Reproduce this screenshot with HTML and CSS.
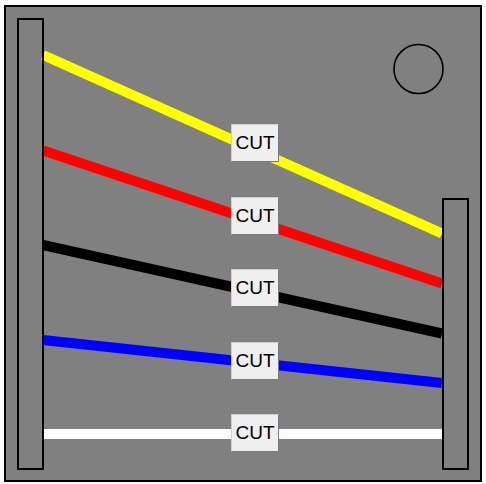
FILE: index.html
```html
<!DOCTYPE html>
<html>
<head>
<meta charset="utf-8">
<link rel="stylesheet" href="styles.css">
</head>
<body>
<div class="board">
  <svg class="wires" width="486" height="484" viewBox="0 0 486 484">
    <line x1="43" y1="55" x2="442" y2="233.5" stroke="#ffff00" stroke-width="10"/>
    <line x1="43" y1="150.5" x2="442" y2="283.5" stroke="#ff0000" stroke-width="10"/>
    <line x1="43" y1="245" x2="442" y2="333.5" stroke="#000000" stroke-width="10"/>
    <line x1="43" y1="340" x2="442" y2="383" stroke="#0000ff" stroke-width="10"/>
    <line x1="43" y1="434" x2="442" y2="434" stroke="#ffffff" stroke-width="10"/>
    <rect x="18" y="19" width="25" height="450" fill="none" stroke="#000" stroke-width="2"/>
    <rect x="443" y="199" width="25" height="270" fill="none" stroke="#000" stroke-width="2"/>
    <circle cx="418.5" cy="69" r="24.5" fill="none" stroke="#000" stroke-width="1.6"/>
  </svg>
  <button class="cut" style="top:117px">CUT</button>
  <button class="cut" style="top:190px">CUT</button>
  <button class="cut" style="top:262px">CUT</button>
  <button class="cut" style="top:335px">CUT</button>
  <button class="cut" style="top:407px">CUT</button>
</div>
</body>
</html>
```
FILE: styles.css
```css
html, body {
  margin: 0;
  padding: 0;
  background: #ffffff;
}
body {
  width: 486px;
  height: 484px;
  position: relative;
  overflow: hidden;
}
.board {
  position: absolute;
  left: 4px;
  top: 5px;
  width: 478px;
  height: 477px;
  box-sizing: border-box;
  border: 2px solid #000;
  background: #808080;
}
.wires {
  position: absolute;
  left: -6px;
  top: -7px;
  display: block;
}
.cut {
  position: absolute;
  left: 225px;
  width: 48px;
  height: 38px;
  box-sizing: border-box;
  margin: 0;
  padding: 0;
  background: #efefef;
  border: 1px solid #cfcfcf;
  border-right-color: #7a7a7a;
  border-bottom-color: #7a7a7a;
  border-radius: 1px;
  font-family: "Liberation Sans", Arial, sans-serif;
  font-size: 19px;
  color: #000;
  line-height: 36px;
  text-align: center;
}
```
